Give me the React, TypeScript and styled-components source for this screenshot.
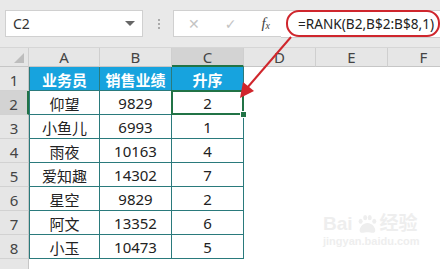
import styled, { createGlobalStyle } from "styled-components";

const GlobalStyle = createGlobalStyle`
  html, body {
    margin: 0;
    padding: 0;
    width: 440px;
    height: 269px;
    overflow: hidden;
    background: #ffffff;
  }
  body {
    font-family: "Noto Sans", "Noto Sans CJK SC", sans-serif;
  }
`;

const columns = ["A", "B", "C", "D", "E", "F"];

const rows = [
  ["业务员", "销售业绩", "升序"],
  ["仰望", "9829", "2"],
  ["小鱼儿", "6993", "1"],
  ["雨夜", "10163", "4"],
  ["爱知趣", "14302", "7"],
  ["星空", "9829", "2"],
  ["阿文", "13352", "6"],
  ["小玉", "10473", "5"],
  ["", "", ""],
];

function App() {
  return (
    <Page>
      <GlobalStyle />
      <Toolbar>
        <NameBox>
          <NameText>C2</NameText>
          <DropArrow />
        </NameBox>
        <Dots>
          <span />
          <span />
          <span />
        </Dots>
        <FuncBox>
          <FuncIcon>✕</FuncIcon>
          <FuncIcon>✓</FuncIcon>
          <FxIcon>
            f<sub>x</sub>
          </FxIcon>
        </FuncBox>
        <FormulaBox>
          <FormulaText>=RANK(B2,B$2:B$8,1)</FormulaText>
        </FormulaBox>
      </Toolbar>

      <Sheet>
        <Corner>
          <CornerMark />
        </Corner>
        {columns.map((c) => (
          <ColHead key={c} $active={c === "C"}>
            {c}
          </ColHead>
        ))}

        {rows.map((r, i) => (
          <Row key={i} index={i} values={r} />
        ))}
      </Sheet>

      <Arrow width="440" height="269" viewBox="0 0 440 269">
        <line x1="291" y1="37" x2="247" y2="88" stroke="#d0262c" strokeWidth="2" />
        <polygon points="240,98 243,82 254,91" fill="#d0262c" />
      </Arrow>

      <Watermark>
        <MarkLine>
          Bai
          <Paw viewBox="0 0 24 22" width="22" height="20">
            <ellipse cx="5" cy="8" rx="2.2" ry="2.8" />
            <ellipse cx="10" cy="4" rx="2.2" ry="2.8" />
            <ellipse cx="15" cy="4" rx="2.2" ry="2.8" />
            <ellipse cx="20" cy="8" rx="2.2" ry="2.8" />
            <path d="M12.5 10 C7 10 3 16 4 19 C5 22 9 20 12.5 20 C16 20 20 22 21 19 C22 16 18 10 12.5 10 Z" />
          </Paw>
          经验
        </MarkLine>
        <MarkUrl>jingyan.baidu.com</MarkUrl>
      </Watermark>
    </Page>
  );
}

function Row({ index, values }: { index: number; values: string[] }) {
  const inTable = index < 8;
  return (
    <>
      <RowHead $active={index === 1}>{inTable ? index + 1 : ""}</RowHead>
      {columns.map((c, j) => {
        const text = j < 3 ? values[j] : "";
        const table = inTable && j < 3;
        return (
          <Cell
            key={c}
            $table={table}
            $head={index === 0 && j < 3}
            $first={table && j === 0}
            $selected={index === 1 && j === 2}
          >
            {text}
          </Cell>
        );
      })}
    </>
  );
}

const Page = styled.div`
  position: relative;
  width: 440px;
  height: 269px;
  overflow: hidden;
  background: #ffffff;
`;

const Toolbar = styled.div`
  display: flex;
  align-items: center;
  height: 48px;
  padding: 0 0 0 5px;
  box-sizing: border-box;
  background: #e9e9e9;
  border-bottom: 1px solid #d6d6d6;
`;

const NameBox = styled.div`
  display: flex;
  align-items: center;
  justify-content: space-between;
  width: 141px;
  height: 27px;
  box-sizing: border-box;
  padding: 0 7px 0 7px;
  background: #ffffff;
  border: 1px solid #d0d0d0;
`;

const NameText = styled.span`
  font-size: 14px;
  color: #333;
`;

const DropArrow = styled.span`
  width: 0;
  height: 0;
  border-left: 5px solid transparent;
  border-right: 5px solid transparent;
  border-top: 5px solid #666;
`;

const Dots = styled.div`
  display: flex;
  flex-direction: column;
  gap: 2px;
  margin: 0 13px 0 15px;
  span {
    width: 2px;
    height: 2px;
    background: #aaa;
  }
`;

const FuncBox = styled.div`
  display: flex;
  align-items: center;
  justify-content: space-between;
  width: 110px;
  height: 27px;
  box-sizing: border-box;
  padding: 0 11px 0 14px;
  background: #ffffff;
  border: 1px solid #d0d0d0;
  border-right: none;
`;

const FuncIcon = styled.span`
  font-family: "DejaVu Sans", sans-serif;
  font-size: 14px;
  color: #c4c4c4;
`;

const FxIcon = styled.span`
  font-family: "Liberation Serif", serif;
  font-style: italic;
  font-size: 15px;
  color: #444;
  sub {
    font-size: 10px;
    vertical-align: -1px;
  }
`;

const FormulaBox = styled.div`
  flex: 1;
  display: flex;
  align-items: center;
  height: 28px;
  box-sizing: border-box;
  padding-left: 5px;
  background: #ffffff;
  border-top: 1px solid #d0d0d0;
  border-bottom: 1px solid #d0d0d0;
`;

const FormulaText = styled.span`
  display: inline-block;
  height: 27px;
  line-height: 23px;
  padding: 0 4px 0 10px;
  box-sizing: border-box;
  border: 2px solid #cf262d;
  border-radius: 13px;
  font-size: 13.6px;
  color: #222;
  white-space: nowrap;
`;

const Sheet = styled.div`
  display: grid;
  grid-template-columns: 29px 71px 72px 72px 72px 72px 72px;
  grid-template-rows: 19px repeat(9, 24px);
`;

const Corner = styled.div`
  position: relative;
  background: #e6e6e6;
  border-right: 1px solid #cfcfcf;
  border-bottom: 1px solid #c6c6c6;
`;

const CornerMark = styled.div`
  position: absolute;
  right: 4px;
  bottom: 3px;
  width: 0;
  height: 0;
  border-left: 10px solid transparent;
  border-bottom: 10px solid #bdbdbd;
`;

const ColHead = styled.div<{ $active?: boolean }>`
  display: flex;
  align-items: center;
  justify-content: center;
  box-sizing: border-box;
  font-size: 15px;
  color: #444;
  background: ${(p) => (p.$active ? "#d3d3d3" : "#e6e6e6")};
  border-right: 1px solid #cfcfcf;
  border-bottom: ${(p) => (p.$active ? "2px solid #217346" : "1px solid #c6c6c6")};
`;

const RowHead = styled.div<{ $active?: boolean }>`
  display: flex;
  align-items: center;
  justify-content: center;
  box-sizing: border-box;
  padding-top: 2px;
  font-size: 15px;
  color: #444;
  background: ${(p) => (p.$active ? "#d3d3d3" : "#e6e6e6")};
  border-bottom: 1px solid #d2d2d2;
  border-right: ${(p) => (p.$active ? "2px solid #217346" : "1px solid #c6c6c6")};
`;

const Cell = styled.div<{
  $table?: boolean;
  $head?: boolean;
  $first?: boolean;
  $selected?: boolean;
}>`
  position: relative;
  display: flex;
  align-items: center;
  justify-content: center;
  box-sizing: border-box;
  padding-top: 1px;
  font-family: "Noto Sans", "Noto Sans CJK SC", sans-serif;
  font-size: 15px;
  font-weight: ${(p) => (p.$head ? 700 : 400)};
  color: ${(p) => (p.$head ? "#ffffff" : "#222")};
  background: ${(p) => (p.$head ? "#17a3de" : "#ffffff")};
  border-right: 1px solid ${(p) => (p.$table ? "#2a7a7c" : "transparent")};
  border-bottom: 1px solid ${(p) => (p.$table ? "#2a7a7c" : "transparent")};
  border-left: ${(p) => (p.$first ? "1px solid #2a7a7c" : "none")};

  ${(p) =>
    p.$selected &&
    `
    &::after {
      content: "";
      position: absolute;
      inset: -1px -1px -1px -1px;
      border: 2px solid #217346;
    }
    &::before {
      content: "";
      position: absolute;
      right: -4px;
      bottom: -4px;
      width: 5px;
      height: 5px;
      background: #217346;
      border: 1px solid #ffffff;
      z-index: 1;
    }
  `}
`;

const Arrow = styled.svg`
  position: absolute;
  left: 0;
  top: 0;
  pointer-events: none;
`;

const Watermark = styled.div`
  position: absolute;
  left: 323px;
  top: 214px;
  display: flex;
  flex-direction: column;
  color: #eeeeee;
  pointer-events: none;
`;

const MarkLine = styled.div`
  display: flex;
  align-items: flex-end;
  font-family: "Liberation Sans", "Noto Sans CJK SC", sans-serif;
  font-size: 19px;
  font-weight: 700;
  line-height: 20px;
`;

const Paw = styled.svg`
  fill: #eeeeee;
  margin: 0 2px 0 3px;
`;

const MarkUrl = styled.div`
  font-family: "Liberation Sans", sans-serif;
  font-size: 11px;
  font-weight: 700;
  margin-top: 1px;
`;

export default App;
